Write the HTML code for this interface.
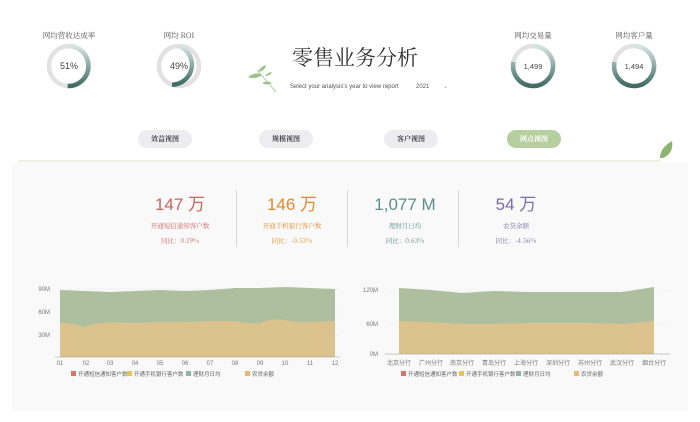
<!DOCTYPE html>
<html><head><meta charset="utf-8"><style>
*{margin:0;padding:0;box-sizing:border-box}
body{width:700px;height:422px;background:#fff;font-family:"Liberation Sans","Noto Sans CJK SC",sans-serif;position:relative;overflow:hidden}
.a{position:absolute}
.gl{font-family:"Noto Serif CJK SC",serif;font-size:7.5px;color:#555;text-align:center;width:90px}
.btn{position:absolute;top:130px;width:54px;height:18px;border-radius:9px;background:#ececf1;font-family:"Noto Serif CJK SC",serif;font-size:7px;font-weight:bold;color:#444;text-align:center;line-height:18px}
.kv{position:absolute;width:110px;text-align:center}
.kv .v{font-size:17px;line-height:20px}
.kv .l{font-family:"Noto Serif CJK SC",serif;font-size:6.5px;margin-top:6px}
.kv .c{font-size:6.5px;margin-top:6px;font-family:"Noto Serif CJK SC",serif}
.ax{font-size:6px;fill:#777}
</style></head><body>
<div class="a" style="left:12px;top:163px;width:676px;height:247px;background:#f9f9f9"></div>
<div class="a gl" style="left:24px;top:30px">网均营收达成率</div>
<div class="a gl" style="left:134px;top:30px">网均 ROI</div>
<div class="a gl" style="left:488px;top:30px">网均交易量</div>
<div class="a gl" style="left:589px;top:30px">网均客户量</div>
<svg class="a" style="left:0;top:0" width="700" height="170">
<defs><linearGradient id="g" x1="0" y1="0" x2="0" y2="1"><stop offset="0" stop-color="#d5e6e2"/><stop offset="1" stop-color="#3f6b62"/></linearGradient></defs>
<g fill="none" stroke-width="4.5">
<circle cx="69" cy="66" r="20" stroke="#e2e2e2"/><path d="M69 46 A20 20 0 0 1 67.7 86" stroke="url(#g)"/>
<circle cx="179" cy="66" r="20" stroke="#e2e2e2"/><path d="M179 46 A20 20 0 0 1 172 84.7" stroke="url(#g)"/>
<circle cx="533" cy="66" r="20" stroke="#e2e2e2"/><path d="M533 46 A20 20 0 1 1 513.5 62" stroke="url(#g)"/>
<circle cx="634" cy="66" r="20" stroke="#e2e2e2"/><path d="M634 46 A20 20 0 1 1 614.5 62" stroke="url(#g)"/>
</g>
<g font-size="9" fill="#444" text-anchor="middle"><text x="69" y="69">51%</text><text x="179" y="69">49%</text><text x="533" y="69" font-size="7.5">1,499</text><text x="634" y="69" font-size="7.5">1,494</text></g>
<g fill="#9cc48a"><path d="M248 77 q8 -6 14 -2 q-7 5 -14 2z"/><path d="M258 72 q3 -6 8 -7 q-1 6 -8 7z"/><path d="M262 83 q5 -3 10 0 q-5 3 -10 0z"/><path d="M265 76 q3 -4 7 -4 q-2 4 -7 4z"/><path d="M257 70 l19 22" stroke="#9cc48a" stroke-width="0.8" fill="none"/></g>
<line x1="18" y1="161" x2="660" y2="161" stroke="#e3ecd9" stroke-width="1.5"/>
<path d="M660 158 q0 -10 12 -17 q2 12 -9 17z" fill="#8cb46e"/>
</svg>
<div class="a" style="left:292px;top:42px;width:140px;font-family:'Noto Serif CJK SC',serif;font-size:21px;color:#333;letter-spacing:0px">零售业务分析</div>
<div class="a" style="left:290px;top:84px;font-size:6px;color:#555">Select your analysis's year to view report</div>
<div class="a" style="left:416px;top:84px;font-size:6px;color:#555">2021</div>
<div class="a" style="left:443px;top:83px;font-size:6px;color:#999">⌄</div>
<div class="btn" style="left:138px">效益视图</div>
<div class="btn" style="left:259px">规模视图</div>
<div class="btn" style="left:384px">客户视图</div>
<div class="btn" style="left:507px;background:#b7cf9f;color:#fff">网点视图</div>
<div class="a" style="left:236px;top:190px;width:1px;height:57px;background:#d6d6d6"></div>
<div class="a" style="left:347px;top:190px;width:1px;height:57px;background:#d6d6d6"></div>
<div class="a" style="left:458px;top:190px;width:1px;height:57px;background:#d6d6d6"></div>
<div class="kv" style="left:125px;top:195px;color:#c9645f"><div class="v">147 万</div><div class="l">开通短信通知客户数</div><div class="c">同比：0.19%</div></div>
<div class="kv" style="left:237px;top:195px;color:#e08a2c"><div class="v">146 万</div><div class="l">开通手机银行客户数</div><div class="c">同比：-0.53%</div></div>
<div class="kv" style="left:350px;top:195px;color:#5f8f88"><div class="v">1,077 M</div><div class="l">理财月日均</div><div class="c">同比：0.63%</div></div>
<div class="kv" style="left:461px;top:195px;color:#7b6fa8"><div class="v">54 万</div><div class="l">农贷余额</div><div class="c">同比：-4.56%</div></div>
<svg class="a" style="left:0;top:270px" width="700" height="120">
<g stroke="#eee" stroke-width="0.5"><line x1="58" y1="19" x2="340" y2="19"/><line x1="58" y1="42" x2="340" y2="42"/><line x1="58" y1="65" x2="340" y2="65"/><line x1="388" y1="21" x2="670" y2="21"/><line x1="388" y1="54" x2="670" y2="54"/></g>
<path d="M60 20 L86 21 L110 22 L135 21 L160 20 L185 21 L210 20 L235 18 L260 18 L285 17 L310 18 L335 19 L335 87 L60 87Z" fill="#aebf9f"/>
<path d="M60 53 Q70 52 85 57 Q95 53 110 52 L135 53 L160 52 L185 52 L210 51 L235 51 Q248 54 260 53 Q272 48 285 50 Q300 53 310 52 L335 51 L335 87 L60 87Z" fill="#dcc28c"/>
<line x1="55" y1="87" x2="340" y2="87" stroke="#999" stroke-width="0.6"/>
<g class="ax" text-anchor="end"><text x="50" y="21">90M</text><text x="50" y="44">60M</text><text x="50" y="67">30M</text></g>
<g class="ax" text-anchor="middle"><text x="60" y="95">01</text><text x="86" y="95">02</text><text x="110" y="95">03</text><text x="135" y="95">04</text><text x="160" y="95">05</text><text x="185" y="95">06</text><text x="210" y="95">07</text><text x="235" y="95">08</text><text x="260" y="95">09</text><text x="285" y="95">10</text><text x="310" y="95">11</text><text x="335" y="95">12</text></g>
<path d="M399 18 L431 20 L462 23 L494 21 L526 22 L558 22 L590 22 L622 22 L654 17 L654 84 L399 84Z" fill="#aebf9f"/>
<path d="M399 51 L431 52 L462 54 L494 54 L526 53 L558 53 L590 53 L622 54 L654 51 L654 84 L399 84Z" fill="#dcc28c"/>
<line x1="385" y1="84" x2="670" y2="84" stroke="#999" stroke-width="0.6"/>
<g class="ax" text-anchor="end"><text x="378" y="22">120M</text><text x="378" y="56">60M</text><text x="378" y="86">0M</text></g>
<g class="ax" text-anchor="middle" font-size="5.5"><text x="399" y="95">北京分行</text><text x="431" y="95">广州分行</text><text x="462" y="95">南京分行</text><text x="494" y="95">青岛分行</text><text x="526" y="95">上海分行</text><text x="558" y="95">深圳分行</text><text x="590" y="95">苏州分行</text><text x="622" y="95">武汉分行</text><text x="654" y="95">烟台分行</text></g>
<g font-size="5.5" fill="#666">
<rect x="71" y="101" width="5" height="5" fill="#d9736a"/><text x="78" y="106">开通短信通知客户数</text>
<rect x="127" y="101" width="5" height="5" fill="#e6c550"/><text x="134" y="106">开通手机银行客户数</text>
<rect x="186" y="101" width="5" height="5" fill="#8fb5a9"/><text x="193" y="106">理财月日均</text>
<rect x="245" y="101" width="5" height="5" fill="#eab774"/><text x="252" y="106">农贷余额</text>
<rect x="401" y="101" width="5" height="5" fill="#d9736a"/><text x="408" y="106">开通短信通知客户数</text>
<rect x="459" y="101" width="5" height="5" fill="#e6c550"/><text x="466" y="106">开通手机银行客户数</text>
<rect x="516" y="101" width="5" height="5" fill="#8fb5a9"/><text x="523" y="106">理财月日均</text>
<rect x="574" y="101" width="5" height="5" fill="#eab774"/><text x="581" y="106">农贷余额</text>
</g>
</svg>
</body></html>
